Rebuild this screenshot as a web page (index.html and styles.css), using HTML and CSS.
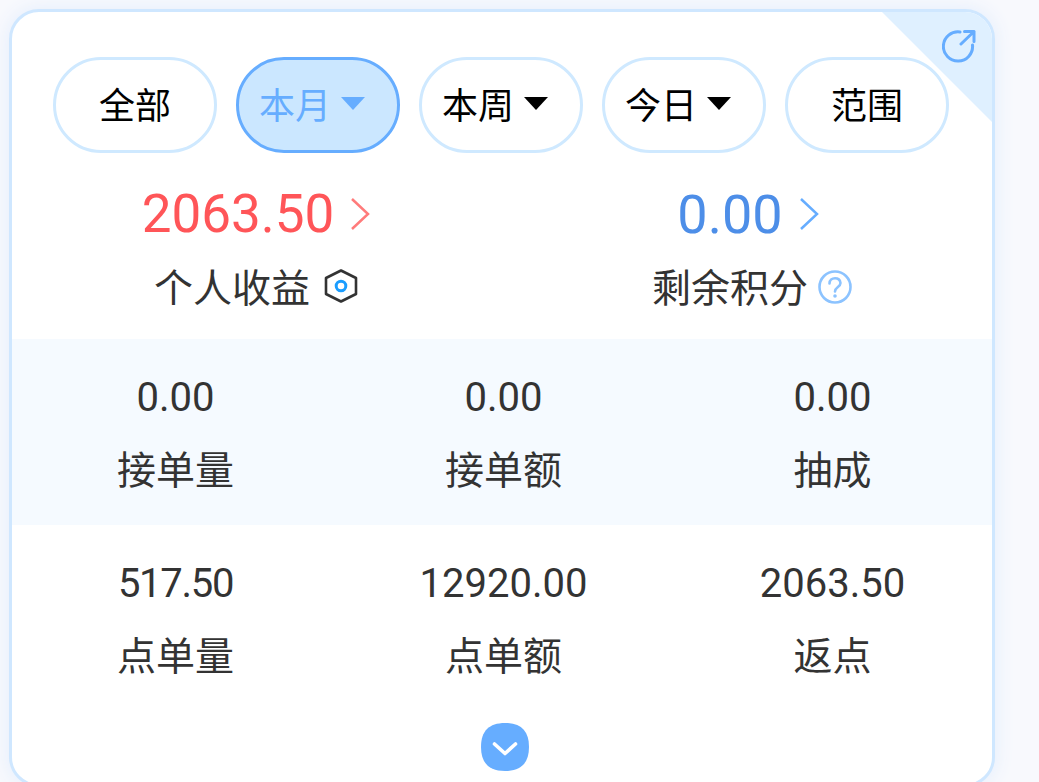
FILE: index.html
```html
<!DOCTYPE html>
<html>
<head>
	<meta charset="utf-8">
	<title>收益</title>
	<link rel="stylesheet" href="styles.css">
</head>
<body>
	<main class="card">
		<div class="corner"></div>
		<svg class="share" viewBox="0 0 34 34">
			<path d="M18 3A14.6 14.6 0 1 0 30.5 16" fill="none" stroke="#66adff" stroke-width="3" stroke-linecap="round"/>
			<path d="M19 15L32 2.5M22.5 2.5H32V12.5" fill="none" stroke="#66adff" stroke-width="3" stroke-linecap="round" stroke-linejoin="round"/>
		</svg>

		<nav class="tabs">
			<div class="tab">全部</div>
			<div class="tab drop active">本月<i class="arrow"></i></div>
			<div class="tab drop">本周<i class="arrow"></i></div>
			<div class="tab drop">今日<i class="arrow"></i></div>
			<div class="tab">范围</div>
		</nav>

		<section class="totals">
			<div class="total income">
				<div class="total-num red">2063.50
					<svg class="more" viewBox="0 0 20 34"><path d="M2 2L18 17L2 32" fill="none" stroke="#ff7b7b" stroke-width="2.5"/></svg>
				</div>
				<div class="total-name">个人收益
					<svg class="tip" viewBox="0 0 34 38">
						<path d="M17 3.5L32 11V27L17 34.5L2 27V11Z" fill="none" stroke="#333" stroke-width="2.6" stroke-linejoin="round"/>
						<circle cx="17" cy="19" r="4.8" fill="none" stroke="#1a9dff" stroke-width="3"/>
					</svg>
				</div>
			</div>
			<div class="total points">
				<div class="total-num blue">0.00
					<svg class="more" viewBox="0 0 20 34"><path d="M2 2L18 17L2 32" fill="none" stroke="#66adff" stroke-width="2.5"/></svg>
				</div>
				<div class="total-name">剩余积分
					<svg class="tip" viewBox="0 0 34 34">
						<circle cx="17" cy="17" r="15.5" fill="none" stroke="#8cc3ff" stroke-width="2.6"/>
						<path d="M11.5 13.5C11.5 6.5 22.5 6.5 22.5 13C22.5 17 17 17 17 21.5" fill="none" stroke="#8cc3ff" stroke-width="2.6" stroke-linecap="round"/>
						<circle cx="17" cy="26" r="1.8" fill="#8cc3ff"/>
					</svg>
				</div>
			</div>
		</section>

		<section class="row shaded">
			<div class="cell"><b>0.00</b><span>接单量</span></div>
			<div class="cell"><b>0.00</b><span>接单额</span></div>
			<div class="cell"><b>0.00</b><span>抽成</span></div>
		</section>
		<section class="row">
			<div class="cell"><b class="tight">517.50</b><span>点单量</span></div>
			<div class="cell"><b>12920.00</b><span>点单额</span></div>
			<div class="cell"><b>2063.50</b><span>返点</span></div>
		</section>

		<div class="expand">
			<svg viewBox="0 0 48 48">
				<path d="M24 0C40 0 48 8 48 24S40 48 24 48S0 40 0 24S8 0 24 0Z" fill="#66adff"/>
				<path d="M13.5 21L24 30.5L34.5 21" fill="none" stroke="#fff" stroke-width="3.6" stroke-linecap="round" stroke-linejoin="round"/>
			</svg>
		</div>
	</main>
</body>
</html>
```

FILE: styles.css
```css
*{
	margin: 0px;
	padding: 0px;
	box-sizing: border-box;
}
html,body{
	height: 782px;
	overflow: hidden;
}
body{
	background-color: #f8f9fd;
	padding: 9px 0 0 9px;
	font-family: "Noto Sans CJK SC", "Noto Sans", sans-serif;
}
.card{
	position: relative;
	width: 986px;
	height: 778px;
	background-color: #fff;
	border: 3px solid #cfe7ff;
	border-radius: 30px;
	box-shadow: 0px 0px 18px 2px #e6effc;
	overflow: hidden;
}
.corner{
	position: absolute;
	top: 0px;
	right: 0px;
	width: 110px;
	height: 110px;
	background-color: #dff0ff;
	clip-path: polygon(0 0, 100% 0, 100% 100%);
}
.share{
	position: absolute;
	top: 17px;
	right: 16px;
	width: 34px;
	height: 34px;
}
.tabs{
	position: relative;
	display: flex;
	gap: 19px;
	padding: 45px 0 0 41px;
}
.tab{
	display: flex;
	align-items: center;
	justify-content: center;
	width: 164px;
	height: 96px;
	padding-bottom: 4px;
	border: 3px solid #cfe9ff;
	border-radius: 48px;
	background-color: #fff;
	font-size: 36px;
	color: #000;
}
.tab.drop{
	padding-right: 12px;
}
.tab.active{
	border-color: #66adff;
	background-color: #cbe7ff;
	color: #66adff;
}
.arrow{
	width: 0px;
	height: 0px;
	margin-left: 10px;
	border-left: 12px solid transparent;
	border-right: 12px solid transparent;
	border-top: 13px solid #000;
}
.tab.active .arrow{
	border-top-color: #66adff;
}
.totals{
	display: flex;
	height: 186px;
	padding-top: 30px;
}
.total{
	flex: 1;
	text-align: center;
}
.income{
	padding-right: 4px;
}
.total-num{
	display: flex;
	align-items: center;
	justify-content: center;
	gap: 16px;
	height: 62px;
	font-family: Roboto, sans-serif;
	font-size: 54px;
}
.red{
	color: #ff5558;
	font-size: 53px;
}
.blue{
	color: #4d8ee8;
}
.more{
	width: 20px;
	height: 34px;
}
.total-name{
	display: flex;
	align-items: center;
	justify-content: center;
	gap: 14px;
	height: 56px;
	margin-top: 12px;
	font-size: 39px;
	color: #333;
}
.points .total-name{
	gap: 10px;
	padding-left: 8px;
}
.tip{
	width: 34px;
	height: 38px;
	margin-top: 2px;
}
.points .tip{
	margin-top: 4px;
}
.row{
	display: grid;
	grid-template-columns: 327px 329px 329px;
	height: 186px;
}
.shaded{
	background-color: #f5faff;
}
.cell{
	display: flex;
	flex-direction: column;
	align-items: center;
	padding-top: 33px;
	color: #333;
}
.cell b{
	font-family: Roboto, sans-serif;
	font-weight: 400;
	font-size: 40px;
	line-height: 52px;
}
.cell b.tight{
	letter-spacing: -1.3px;
}
.cell span{
	margin-top: 16px;
	font-size: 39px;
	line-height: 54px;
}
.expand{
	display: flex;
	justify-content: center;
	padding: 12px 0 0 5px;
}
.expand svg{
	width: 48px;
	height: 48px;
}
```
